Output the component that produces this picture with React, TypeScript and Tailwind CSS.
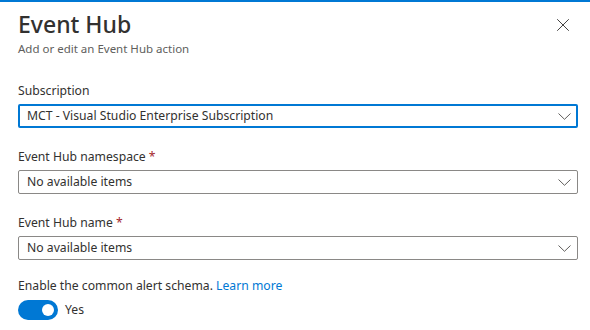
import { X } from "lucide-react";

const font = { fontFamily: '"Noto Sans", "Open Sans", sans-serif' };

function Chevron() {
  return (
    <svg width="13" height="7" viewBox="0 0 13 7" fill="none" className="text-[#605e5c]">
      <path d="M0.5 0.5L6.5 6.3L12.5 0.5" stroke="currentColor" strokeWidth="1" />
    </svg>
  );
}

function Dropdown({ value, focused }: { value: string; focused?: boolean }) {
  return (
    <div
      className={`flex h-6 items-center justify-between rounded-[2px] bg-white ${
        focused ? "border-2 border-[#0078d4] pl-[7px] pr-[5px]" : "border border-[#8a8886] pl-[8px] pr-[6px]"
      }`}
    >
      <span className="text-[12.2px] leading-[18px] text-[#323130]">{value}</span>
      <Chevron />
    </div>
  );
}

function Field({ label, required, children }: { label: string; required?: boolean; children: React.ReactNode }) {
  return (
    <div className="flex flex-col gap-[4px]">
      <div className="text-[12.2px] leading-[18px] text-[#323130]">
        {label}
        {required && <span className="text-[#a4262c]"> *</span>}
      </div>
      {children}
    </div>
  );
}

export default function App() {
  return (
    <div style={font} className="h-[330px] w-[590px] overflow-hidden border-t-2 border-[#0078d4] bg-white">
      <div className="flex items-start justify-between pl-[18px] pr-[16px] pt-[6px]">
        <div>
          <h1 className="text-[23px] font-medium leading-[32px] text-[#323130]">Event Hub</h1>
          <p className="mt-[1px] text-[11.5px] leading-[16px] text-[#605e5c]">Add or edit an Event Hub action</p>
        </div>
        <button className="mt-[6px] text-[#323130]">
          <X size={22} strokeWidth={1} />
        </button>
      </div>

      <div className="flex flex-col gap-[20px] pl-[18px] pr-[12px] pt-[25px]">
        <Field label="Subscription">
          <Dropdown value="MCT - Visual Studio Enterprise Subscription" focused />
        </Field>
        <Field label="Event Hub namespace" required>
          <Dropdown value="No available items" />
        </Field>
        <Field label="Event Hub name" required>
          <Dropdown value="No available items" />
        </Field>
        <div className="-mt-[3px] flex flex-col gap-[5px]">
          <div className="text-[12.2px] leading-[18px] text-[#323130]">
            Enable the common alert schema. <span className="text-[#0078d4]">Learn more</span>
          </div>
          <div className="flex items-center gap-[7px]">
            <div className="flex h-[20px] w-[40px] items-center justify-end rounded-full bg-[#0078d4] pr-[4px]">
              <div className="h-[12px] w-[12px] rounded-full bg-white" />
            </div>
            <span className="text-[12.2px] leading-[18px] text-[#323130]">Yes</span>
          </div>
        </div>
      </div>
    </div>
  );
}
